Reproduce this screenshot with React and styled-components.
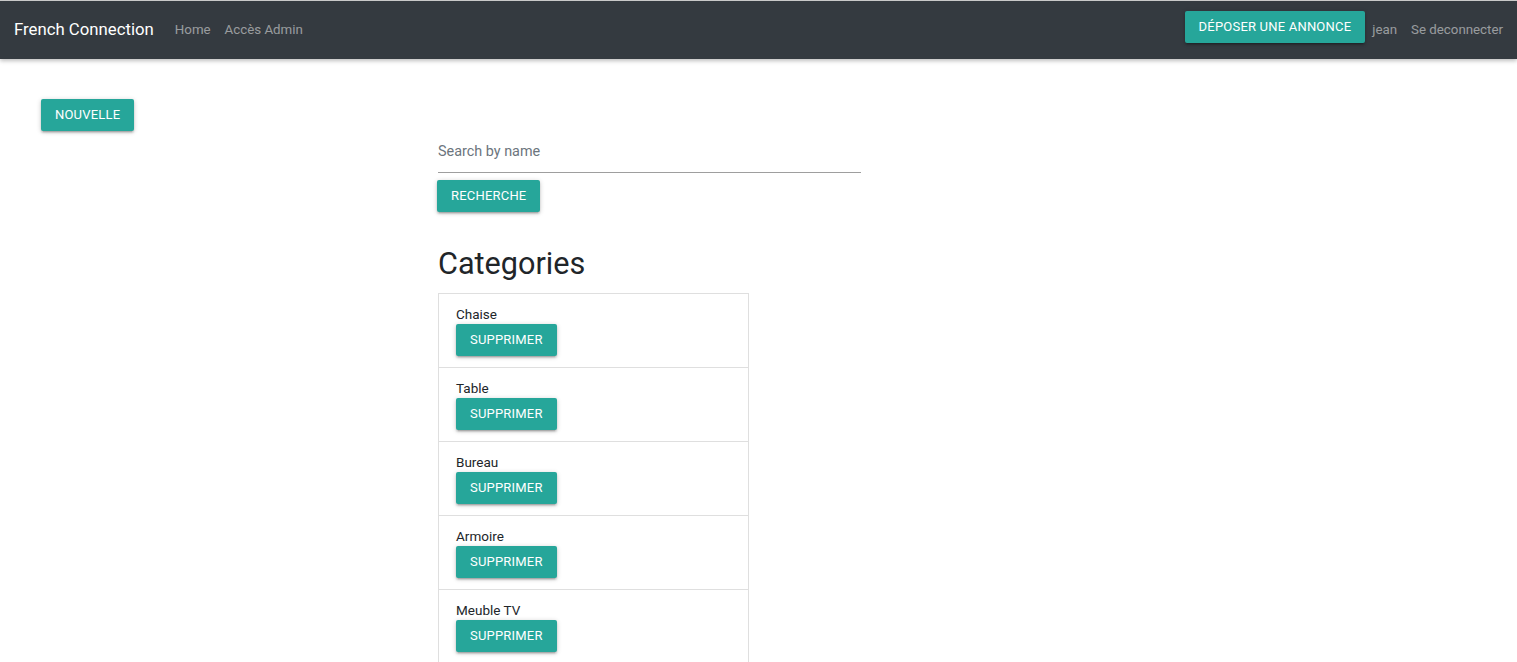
import React from "react";
import styled, { createGlobalStyle } from "styled-components";

const GlobalStyle = createGlobalStyle`
  html, body {
    margin: 0;
    padding: 0;
    background: #ffffff;
    font-family: Roboto, "Liberation Sans", sans-serif;
    color: #212529;
  }
  * {
    box-sizing: border-box;
  }
`;

const Navbar = styled.nav`
  height: 59px;
  background-color: #343a40;
  border-top: 1px solid #c9c9c9;
  display: flex;
  align-items: center;
  padding: 0 14px 2px 14px;
  box-shadow: 0 2px 4px rgba(0, 0, 0, 0.25);
  position: relative;
  z-index: 1;
`;

const Brand = styled.a`
  color: #ffffff;
  font-size: 16.75px;
  margin: -1px 21px 0 0;
  text-decoration: none;
`;

const NavLink = styled.a`
  color: rgba(255, 255, 255, 0.5);
  font-size: 13.3px;
  margin-right: ${(p) => p.$gap ?? 14}px;
  text-decoration: none;
`;

const Spacer = styled.div`
  flex: 1;
`;

const Button = styled.button`
  background-color: #26a69a;
  color: #ffffff;
  border: none;
  border-radius: 2px;
  height: 32px;
  padding: 0 14px 2px 14px;
  font-family: Roboto, "Liberation Sans", sans-serif;
  font-size: 13px;
  letter-spacing: 0.2px;
  text-transform: uppercase;
  cursor: pointer;
  box-shadow: 0 2px 2px 0 rgba(0, 0, 0, 0.14), 0 3px 1px -2px rgba(0, 0, 0, 0.12),
    0 1px 5px 0 rgba(0, 0, 0, 0.2);
`;

const NavButton = styled(Button)`
  margin-top: -4px;
  margin-right: 7px;
`;

const Main = styled.main`
  padding: 40px 0 0 41px;
`;

const Content = styled.section`
  margin-left: 396px;
  width: 424px;
  padding-top: 11px;
`;

const SearchInput = styled.input`
  display: block;
  width: 423px;
  height: 31px;
  border: none;
  border-bottom: 1px solid #9e9e9e;
  outline: none;
  font-family: Roboto, "Liberation Sans", sans-serif;
  font-size: 14.4px;
  padding: 0 0 12px 0;
  margin: 0 0 7px 1px;
  color: #212529;
  &::placeholder {
    color: #6c757d;
  }
`;

const Heading = styled.h2`
  font-size: 30.6px;
  font-weight: 400;
  margin: 34px 0 11px 1px;
  line-height: 36px;
`;

const List = styled.ul`
  list-style: none;
  margin: 0 0 0 1px;
  padding: 0;
  width: 311px;
  border: 1px solid #dfdfdf;
`;

const Item = styled.li`
  padding: 10px 17px 11px 17px;
  border-top: ${(p) => (p.$first ? "none" : "1px solid #dfdfdf")};
`;

const ItemName = styled.div`
  font-size: 13.5px;
  line-height: 20px;
`;

const categories = ["Chaise", "Table", "Bureau", "Armoire", "Meuble TV"];

export default function App() {
  return (
    <>
      <GlobalStyle />
      <Navbar>
        <Brand href="#">French Connection</Brand>
        <NavLink href="#">Home</NavLink>
        <NavLink href="#">Accès Admin</NavLink>
        <Spacer />
        <NavButton>Déposer une annonce</NavButton>
        <NavLink href="#">jean</NavLink>
        <NavLink href="#" $gap={0}>
          Se deconnecter
        </NavLink>
      </Navbar>
      <Main>
        <Button>Nouvelle</Button>
        <Content>
          <SearchInput placeholder="Search by name" />
          <Button>Recherche</Button>
          <Heading>Categories</Heading>
          <List>
            {categories.map((c, i) => (
              <Item key={c} $first={i === 0}>
                <ItemName>{c}</ItemName>
                <Button>Supprimer</Button>
              </Item>
            ))}
          </List>
        </Content>
      </Main>
    </>
  );
}
